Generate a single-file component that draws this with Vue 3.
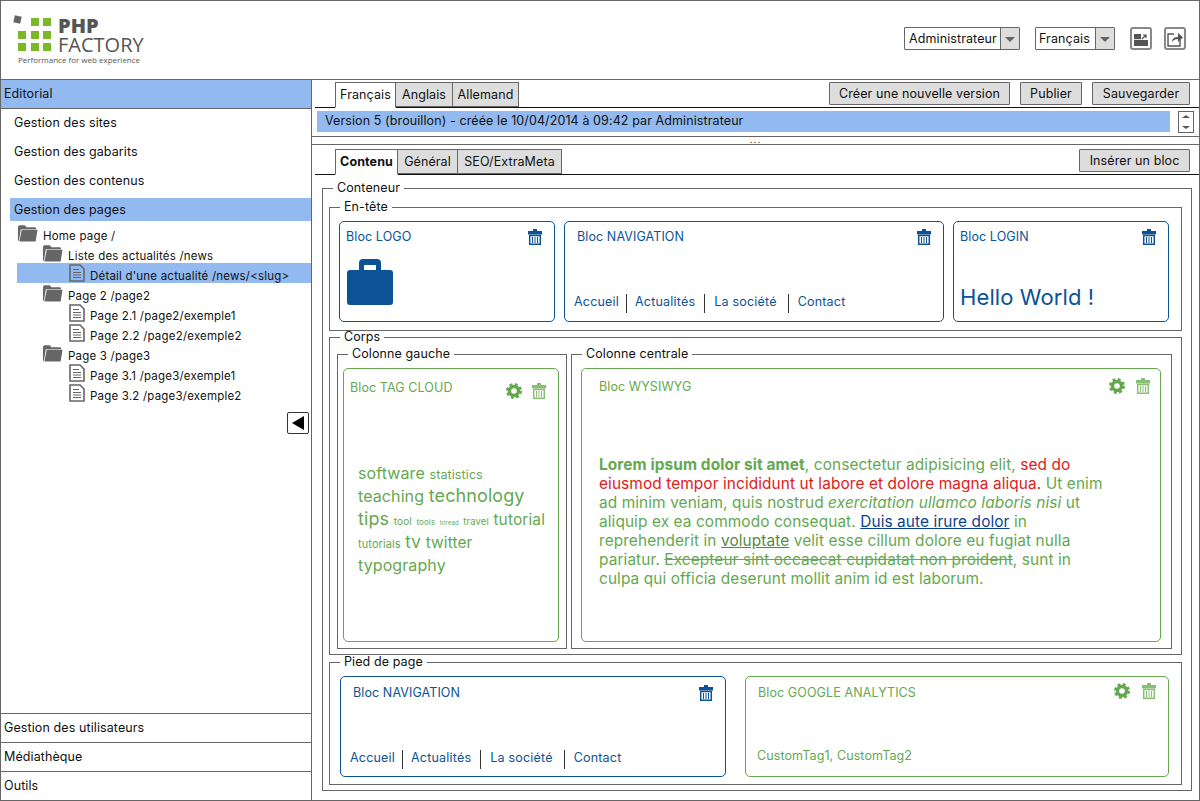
<template>
  <div class="app">
    <svg class="sprite" width="0" height="0">
      <symbol id="trash" viewBox="0 0 14 16">
        <path d="M5 0h4v2h5v3.500h-14v-3.500h5z" fill="currentColor" />
        <path d="M1.700 6.500h10.600v8.700h-10.600z" fill="none" stroke="currentColor" stroke-width="1.500" />
        <path d="M4.500 8v6M7 8v6M9.500 8v6" stroke="currentColor" stroke-width="1" />
      </symbol>
      <symbol id="gear" viewBox="0 0 16 16">
        <circle cx="8" cy="8" r="4.500" fill="none" stroke="currentColor" stroke-width="3.400" />
        <circle cx="8" cy="8" r="6.500" fill="none" stroke="currentColor" stroke-width="3" stroke-dasharray="2.800 2.305" />
      </symbol>
      <symbol id="folder" viewBox="0 0 22 18">
        <path d="M1 3q0-2 2-2h5l2 2h9l1 1v1h-16l-2 12h-1z" fill="#666" />
        <path d="M5 5.500h16.500l-2 12.500h-17z" fill="#666" />
      </symbol>
      <symbol id="doc" viewBox="0 0 16 18">
        <path d="M1 1h10l4 4v12h-14z" fill="none" stroke="#666" stroke-width="1.600" />
        <path d="M4 5.500h6M4 8.500h8M4 11h8M4 13.500h8" stroke="#666" stroke-width="1.200" />
      </symbol>
    </svg>

    <header class="top">
      <div class="logo">
        <div class="logo-main">
          <span class="logo-chip"></span>
          <div class="logo-grid">
            <i v-for="n in 9" :key="n" :class="{ empty: n === 1 }"></i>
          </div>
          <div class="logo-name">
            <b>PHP</b>
            <span>FACTORY</span>
          </div>
        </div>
        <div class="logo-sub">Performance for web experience</div>
      </div>
      <div class="top-tools">
        <div class="combo combo-user">
          <span>Administrateur</span>
          <em></em>
        </div>
        <div class="combo combo-lang">
          <span>Français</span>
          <em></em>
        </div>
        <div class="square-btn">
          <svg width="16" height="16" viewBox="0 0 16 16">
            <path d="M1 3h14v12h-14z" fill="#555" />
            <path d="M8 3h7v6h-7z" fill="#fff" />
            <path d="M9 8l4-4M10 4h3v3" stroke="#555" stroke-width="1.200" fill="none" />
            <path d="M1 8h7v1h-7z" fill="#ddd" />
          </svg>
        </div>
        <div class="square-btn">
          <svg width="16" height="16" viewBox="0 0 16 16">
            <path d="M7 3h-6v12h12v-6" fill="none" stroke="#555" stroke-width="1.400" />
            <path d="M5 11q0-5 6-5v-4l5 4.500-5 4.500v-3q-4 0-6 3z" fill="#555" />
          </svg>
        </div>
      </div>
    </header>

    <div class="body">
      <aside class="side">
        <div class="side-row side-title">Editorial</div>
        <div class="side-links">
          <div v-for="item in sideLinks" :key="item" class="side-link" :class="{ on: item === 'Gestion des pages' }">{{ item }}</div>
        </div>
        <div class="tree">
          <div v-for="node in tree" :key="node.label" class="tree-row" :class="['lvl' + node.level, { sel: node.sel }]">
            <svg v-if="node.folder" class="ico-folder"><use href="#folder" /></svg>
            <svg v-else class="ico-doc"><use href="#doc" /></svg>
            <span>{{ node.label }}</span>
          </div>
        </div>
        <div class="collapse-line">
          <div class="collapse"><i></i></div>
        </div>
        <div class="side-bottom">
          <div v-for="item in sideBottom" :key="item" class="side-row">{{ item }}</div>
        </div>
      </aside>

      <main class="main">
        <div class="bar bar-first">
          <div class="tabs">
            <div v-for="(t, i) in langTabs" :key="t" class="tab" :class="{ active: i === 0 }">{{ t }}</div>
          </div>
          <div class="actions">
            <button class="btn">Créer une nouvelle version</button>
            <button class="btn">Publier</button>
            <button class="btn">Sauvegarder</button>
          </div>
        </div>
        <div class="version-line">
          <div class="version">Version 5 (brouillon) - créée le 10/04/2014 à 09:42 par Administrateur</div>
          <div class="spin"><i class="up"></i><i class="down"></i></div>
        </div>
        <div class="splitter">...</div>
        <div class="bar bar-second">
          <div class="tabs">
            <div v-for="(t, i) in contentTabs" :key="t" class="tab" :class="{ active: i === 0 }">{{ t }}</div>
          </div>
          <div class="actions">
            <button class="btn">Insérer un bloc</button>
          </div>
        </div>

        <fieldset class="fs conteneur">
          <legend>Conteneur</legend>

          <fieldset class="fs entete">
            <legend>En-tête</legend>
            <div class="card blue">
              <div class="card-head"><span>Bloc LOGO</span><svg class="ic"><use href="#trash" /></svg></div>
              <svg class="case" width="46" height="46" viewBox="0 0 46 46">
                <path d="M12 12v-8q0-4 4-4h14q4 0 4 4v8h-5v-6h-12v6z" fill="currentColor" />
                <rect y="11" width="46" height="35" rx="3" fill="currentColor" />
              </svg>
            </div>
            <div class="card blue">
              <div class="card-head inset"><span>Bloc NAVIGATION</span><svg class="ic"><use href="#trash" /></svg></div>
              <div class="nav">
                <span v-for="n in navItems" :key="n">{{ n }}</span>
              </div>
            </div>
            <div class="card blue">
              <div class="card-head"><span>Bloc LOGIN</span><svg class="ic"><use href="#trash" /></svg></div>
              <div class="hello">Hello World !</div>
            </div>
          </fieldset>

          <fieldset class="fs corps">
            <legend>Corps</legend>
            <fieldset class="fs col-left">
              <legend>Colonne gauche</legend>
              <div class="card green tall">
                <div class="card-head">
                  <span>Bloc TAG CLOUD</span>
                  <div class="ics">
                    <svg class="ic gear"><use href="#gear" /></svg>
                    <svg class="ic light"><use href="#trash" /></svg>
                  </div>
                </div>
                <div class="cloud">
                  <template v-for="t in tags" :key="t.w"><span :class="{ drop: t.drop }" :style="{ fontSize: t.s + 'px' }">{{ t.w }}</span>{{ ' ' }}</template>
                </div>
              </div>
            </fieldset>
            <fieldset class="fs col-center">
              <legend>Colonne centrale</legend>
              <div class="card green tall wys">
                <div class="card-head inset2">
                  <span>Bloc WYSIWYG</span>
                  <div class="ics">
                    <svg class="ic gear"><use href="#gear" /></svg>
                    <svg class="ic light"><use href="#trash" /></svg>
                  </div>
                </div>
                <p class="lorem">
                  <b>Lorem ipsum dolor sit amet</b>, consectetur adipisicing elit,
                  <span class="red">sed do<br>eiusmod tempor incididunt ut labore et dolore magna aliqua.</span>
                  Ut enim<br>ad minim veniam, quis nostrud <i>exercitation ullamco laboris nisi</i> ut<br>
                  aliquip ex ea commodo consequat. <a class="lnk">Duis aute irure dolor</a> in<br>
                  reprehenderit in <u>voluptate</u> velit esse cillum dolore eu fugiat nulla<br>
                  pariatur. <s>Excepteur sint occaecat cupidatat non proident</s>, sunt in<br>
                  culpa qui officia deserunt mollit anim id est laborum.
                </p>
              </div>
            </fieldset>
          </fieldset>

          <fieldset class="fs pied">
            <legend>Pied de page</legend>
            <div class="card blue">
              <div class="card-head inset3"><span>Bloc NAVIGATION</span><svg class="ic"><use href="#trash" /></svg></div>
              <div class="nav">
                <span v-for="n in navItems" :key="n">{{ n }}</span>
              </div>
            </div>
            <div class="card green">
              <div class="card-head inset"><span>Bloc GOOGLE ANALYTICS</span>
                <div class="ics">
                  <svg class="ic gear"><use href="#gear" /></svg>
                  <svg class="ic light"><use href="#trash" /></svg>
                </div>
              </div>
              <div class="custom">CustomTag1, CustomTag2</div>
            </div>
          </fieldset>
        </fieldset>
      </main>
    </div>
  </div>
</template>

<script setup>
const sideLinks = ['Gestion des sites', 'Gestion des gabarits', 'Gestion des contenus', 'Gestion des pages']
const sideBottom = ['Gestion des utilisateurs', 'Médiathèque', 'Outils']
const langTabs = ['Français', 'Anglais', 'Allemand']
const contentTabs = ['Contenu', 'Général', 'SEO/ExtraMeta']
const navItems = ['Accueil', 'Actualités', 'La société', 'Contact']

const tree = [
  { label: 'Home page /', level: 0, folder: true },
  { label: 'Liste des actualités /news', level: 1, folder: true },
  { label: "Détail d'une actualité /news/<slug>", level: 2, sel: true },
  { label: 'Page 2 /page2', level: 1, folder: true },
  { label: 'Page 2.1 /page2/exemple1', level: 2 },
  { label: 'Page 2.2 /page2/exemple2', level: 2 },
  { label: 'Page 3 /page3', level: 1, folder: true },
  { label: 'Page 3.1 /page3/exemple1', level: 2 },
  { label: 'Page 3.2 /page3/exemple2', level: 2 },
]

const tags = [
  { w: 'software', s: 16 }, { w: 'statistics', s: 12.5 }, { w: 'teaching', s: 16 },
  { w: 'technology', s: 18 }, { w: 'tips', s: 18 }, { w: 'tool', s: 10 },
  { w: 'tools', s: 8 }, { w: 'toread', s: 6 }, { w: 'travel', s: 9.5 },
  { w: 'tutorial', s: 15.5 }, { w: 'tutorials', s: 11, drop: true }, { w: 'tv', s: 17 },
  { w: 'twitter', s: 15.5 }, { w: 'typography', s: 16 },
]
</script>

<style>
html, body { margin: 0; background: #fff; }
</style>

<style scoped>
.app {
  width: 1200px;
  height: 801px;
  box-sizing: border-box;
  border: 1px solid #666;
  display: flex;
  flex-direction: column;
  font-family: Inter, "DejaVu Sans", sans-serif;
  font-size: 12.5px;
  letter-spacing: 0.1px;
  color: #111;
  overflow: hidden;
}
.sprite { position: absolute; }

.top {
  height: 78px;
  flex: none;
  border-bottom: 1px solid #666;
  display: flex;
  justify-content: space-between;
  padding: 0 13px;
}
.logo { padding-top: 13px; }
.logo-main { display: flex; position: relative; }
.logo-chip {
  position: absolute;
  left: 0;
  top: 2px;
  width: 7px;
  height: 7px;
  background: #666;
  transform: rotate(12deg);
}
.logo-grid {
  display: grid;
  grid-template-columns: repeat(3, 8px);
  grid-auto-rows: 8px;
  gap: 4.500px;
  margin: 4px 7px 0 4px;
}
.logo-grid i { background: #7ab828; }
.logo-grid i.empty { background: none; }
.logo-name {
  display: flex;
  flex-direction: column;
  color: #555;
  line-height: 19px;
  padding-top: 2px;
  font-family: "Open Sans", sans-serif;
  letter-spacing: 0;
}
.logo-name b { font-size: 20px; font-weight: 800; }
.logo-name span { font-size: 20px; }
.logo-sub {
  font-family: "Open Sans", sans-serif;
  font-size: 8px;
  letter-spacing: 0;
  color: #555;
  margin: 0 0 0 4px;
}
.top-tools {
  display: flex;
  align-items: flex-start;
  padding-top: 26px;
}
.combo {
  height: 23px;
  box-sizing: border-box;
  border: 1px solid #666;
  border-radius: 1px;
  display: flex;
  justify-content: space-between;
  line-height: 21px;
  padding-left: 3px;
}
.combo-user { width: 116px; margin-right: 15px; padding-left: 4px; }
.combo-lang { width: 80px; margin-right: 15px; }
.combo em {
  width: 18px;
  background: #ddd;
  border-left: 1px solid #666;
  position: relative;
}
.combo em::after {
  content: "";
  position: absolute;
  left: 4px;
  top: 9px;
  border: 5px solid transparent;
  border-bottom: 0;
  border-top: 5px solid #666;
}
.square-btn {
  width: 22px;
  height: 23px;
  box-sizing: border-box;
  border: 2px solid #888;
  border-radius: 3px;
  margin-right: 12px;
  display: flex;
  align-items: center;
  justify-content: center;
}
.square-btn:last-child { margin-right: 0; }

.body { flex: 1; display: flex; min-height: 0; }
.side {
  width: 311px;
  flex: none;
  box-sizing: border-box;
  border-right: 1px solid #666;
  display: flex;
  flex-direction: column;
}
.side-row {
  height: 28px;
  line-height: 27px;
  padding-left: 3px;
}
.side-title {
  background: #92baf0;
  border-bottom: 1px solid #666;
}
.side-links { padding: 2px 0 0 9px; }
.side-link {
  height: 23px;
  line-height: 23px;
  padding-left: 4px;
  margin: 0 0 6px;
}
.side-link.on { background: #92baf0; }
.tree { padding: 0 0 0 16px; margin-top: -4px; }
.tree-row {
  height: 20px;
  display: flex;
  align-items: center;
  font-size: 11.500px;
  letter-spacing: 0.2px;
}
.tree-row span { margin-top: 6px; }
.tree-row.lvl1 { padding-left: 25px; }
.tree-row.lvl2 { padding-left: 52px; }
.tree-row.sel { background: #92baf0; }
.ico-folder { width: 21px; height: 18px; margin-right: 5px; flex: none; }
.ico-doc { width: 16px; height: 18px; margin-right: 5px; flex: none; }
.collapse-line {
  display: flex;
  justify-content: flex-end;
  padding: 9px 2px 0 0;
}
.collapse {
  width: 22px;
  height: 22px;
  box-sizing: border-box;
  border: 1px solid #333;
  border-radius: 2px;
  display: flex;
  align-items: center;
  justify-content: center;
}
.collapse i {
  border: 7px solid transparent;
  border-left: 0;
  border-right: 12px solid #000;
}
.side-bottom { margin-top: auto; }
.side-bottom .side-row { border-top: 1px solid #666; }

.main {
  flex: 1;
  min-width: 0;
  display: flex;
  flex-direction: column;
}
.bar {
  display: flex;
  justify-content: space-between;
  border-bottom: 1px solid #111;
  padding-left: 20px;
  margin-left: 3px;
}
.bar-first { margin-top: 2px; height: 25px; }
.bar-second { height: 25px; }
.tabs { display: flex; }
.tab {
  height: 25px;
  box-sizing: border-box;
  border: 1px solid #666;
  border-left-width: 0;
  background: #ddd;
  text-align: center;
  line-height: 24px;
}
.tab:first-child { border-left-width: 1px; }
.bar-first .tab:nth-child(1) { width: 61px; }
.bar-first .tab:nth-child(2) { width: 57px; }
.bar-first .tab:nth-child(3) { width: 66px; }
.bar-second .tab:nth-child(1) { width: 63px; }
.bar-second .tab:nth-child(2) { width: 60px; }
.bar-second .tab:nth-child(3) { width: 104px; }
.tab.active {
  background: #fff;
  border-bottom-color: #fff;
  height: 26px;
}
.bar-second .tab.active { font-weight: 700; }
.actions { display: flex; gap: 10px; padding-right: 9px; align-items: flex-start; }
.btn {
  height: 23px;
  box-sizing: border-box;
  padding: 0;
  border: 1px solid #666;
  border-radius: 1px;
  background: #ddd;
  font: inherit;
  letter-spacing: inherit;
  color: inherit;
}
.actions .btn:nth-child(1) { width: 181px; }
.actions .btn:nth-child(2) { width: 62px; }
.actions .btn:nth-child(3) { width: 98px; }
.bar-second .btn:nth-child(1) { width: 111px; }

.version-line {
  display: flex;
  padding: 3px 5px 0 5px;
  gap: 8px;
}
.version {
  flex: 1;
  height: 21px;
  line-height: 20px;
  background: #92baf0;
  padding-left: 8px;
}
.spin {
  width: 16px;
  height: 22px;
  box-sizing: border-box;
  border: 1px solid #666;
  display: flex;
  flex-direction: column;
  justify-content: space-between;
  align-items: center;
  padding: 3px 0;
}
.spin i { border: 4px solid transparent; }
.spin .up { border-top: 0; border-bottom: 3px solid #555; }
.spin .down { border-bottom: 0; border-top: 3px solid #555; }
.splitter {
  height: 7px;
  margin-top: 3px;
  margin-bottom: 4px;
  border-top: 1px solid #666;
  border-bottom: 1px solid #666;
  text-align: center;
  font-size: 10px;
  line-height: 4px;
  letter-spacing: 1px;
}

.fs {
  margin: 0;
  min-width: 0;
  box-sizing: border-box;
  border: 1px solid #666;
  padding: 0;
}
.fs legend {
  padding: 0 4px;
  line-height: 14px;
}
.conteneur {
  margin: 6px 7px 0 10px;
  padding: 5px 9px 5px 6px;
}
.conteneur > legend { margin-left: 4px; }
.entete {
  display: grid;
  grid-template-columns: 216px 380px 216px;
  gap: 9px;
  padding: 7px 12px 8px 9px;
}
.entete > legend { margin-left: 1px; }
.corps {
  display: flex;
  gap: 4px;
  padding: 3px 9px 5px 7px;
  margin-top: -1px;
}
.corps > legend { margin-left: 3px; }
.col-left { width: 230px; padding: 7px 7px 6px 5px; flex: none; }
.col-left > legend { margin-left: 5px; }
.col-center { flex: 1; padding: 7px 10px 6px 9px; }
.col-center > legend { margin-left: 1px; }
.pied {
  display: grid;
  grid-template-columns: 386px 424px;
  gap: 19px;
  padding: 7px 12px 7px 10px;
}
.card {
  height: 101px;
  box-sizing: border-box;
  border: 1px solid;
  border-radius: 5px;
  display: flex;
  flex-direction: column;
  padding: 7px 6px 7px 6px;
  min-width: 0;
}
.card.tall { height: 274px; padding-top: 11px; }
.card.wys { padding-top: 10px; }
.pied .card { padding-top: 8px; }
.blue { color: #0b5394; }
.green { color: #65a84f; }
.card-head {
  display: flex;
  justify-content: space-between;
  line-height: 16px;
}
.card-head.inset { padding-left: 6px; }
.card-head.inset2 { padding-left: 11px; }
.card-head.inset3 { padding-left: 6px; }
.ic { width: 14px; height: 16px; margin: 0 6px 0 0; color: currentColor; flex: none; }
.ic.gear { width: 16px; margin: 0; }
.ic.light { color: #88bd75; }
.ics { display: flex; gap: 10px; margin-top: 3px; }
.ics .light { margin-right: 6px; }
.wys .ics { gap: 11px; margin-top: -1px; }
.wys .ics .light { margin-right: 4px; }
.pied .ics { gap: 12px; margin-top: -2px; }
.pied .ics .light { margin-right: 6px; }
.case { margin: 14px 0 0 1px; }
.nav {
  margin-top: auto;
  display: flex;
  padding-left: 3px;
  margin-bottom: 1px;
  letter-spacing: 0.2px;
}
.pied .nav { margin-bottom: 0; }
.nav span {
  height: 19px;
  line-height: 16px;
  padding-right: 9px;
  margin-right: 9px;
  border-right: 1px solid #333;
}
.nav span:first-child { padding-right: 7px; margin-right: 8px; }
.nav span:nth-child(3) { padding-right: 11px; }
.nav span:last-child { border-right: 0; }
.hello {
  margin-top: auto;
  font-size: 22px;
  line-height: 26px;
  margin-bottom: 4px;
}
.cloud {
  margin-top: 64px;
  padding: 0 0 0 8px;
  line-height: 23px;
  word-spacing: 1px;
}
.cloud span { line-height: 1; }
.cloud .drop { display: inline-block; padding-top: 6px; }
.lorem {
  margin: 60px 0 0 11px;
  font-size: 15.400px;
  line-height: 19px;
  white-space: nowrap;
}
.red { color: #e02020; }
.lnk { color: #0b3f8f; text-decoration: underline; }
.lorem u { color: #558a42; }
.custom { margin-top: auto; padding-left: 5px; line-height: 16px; margin-bottom: 5px; }
</style>
